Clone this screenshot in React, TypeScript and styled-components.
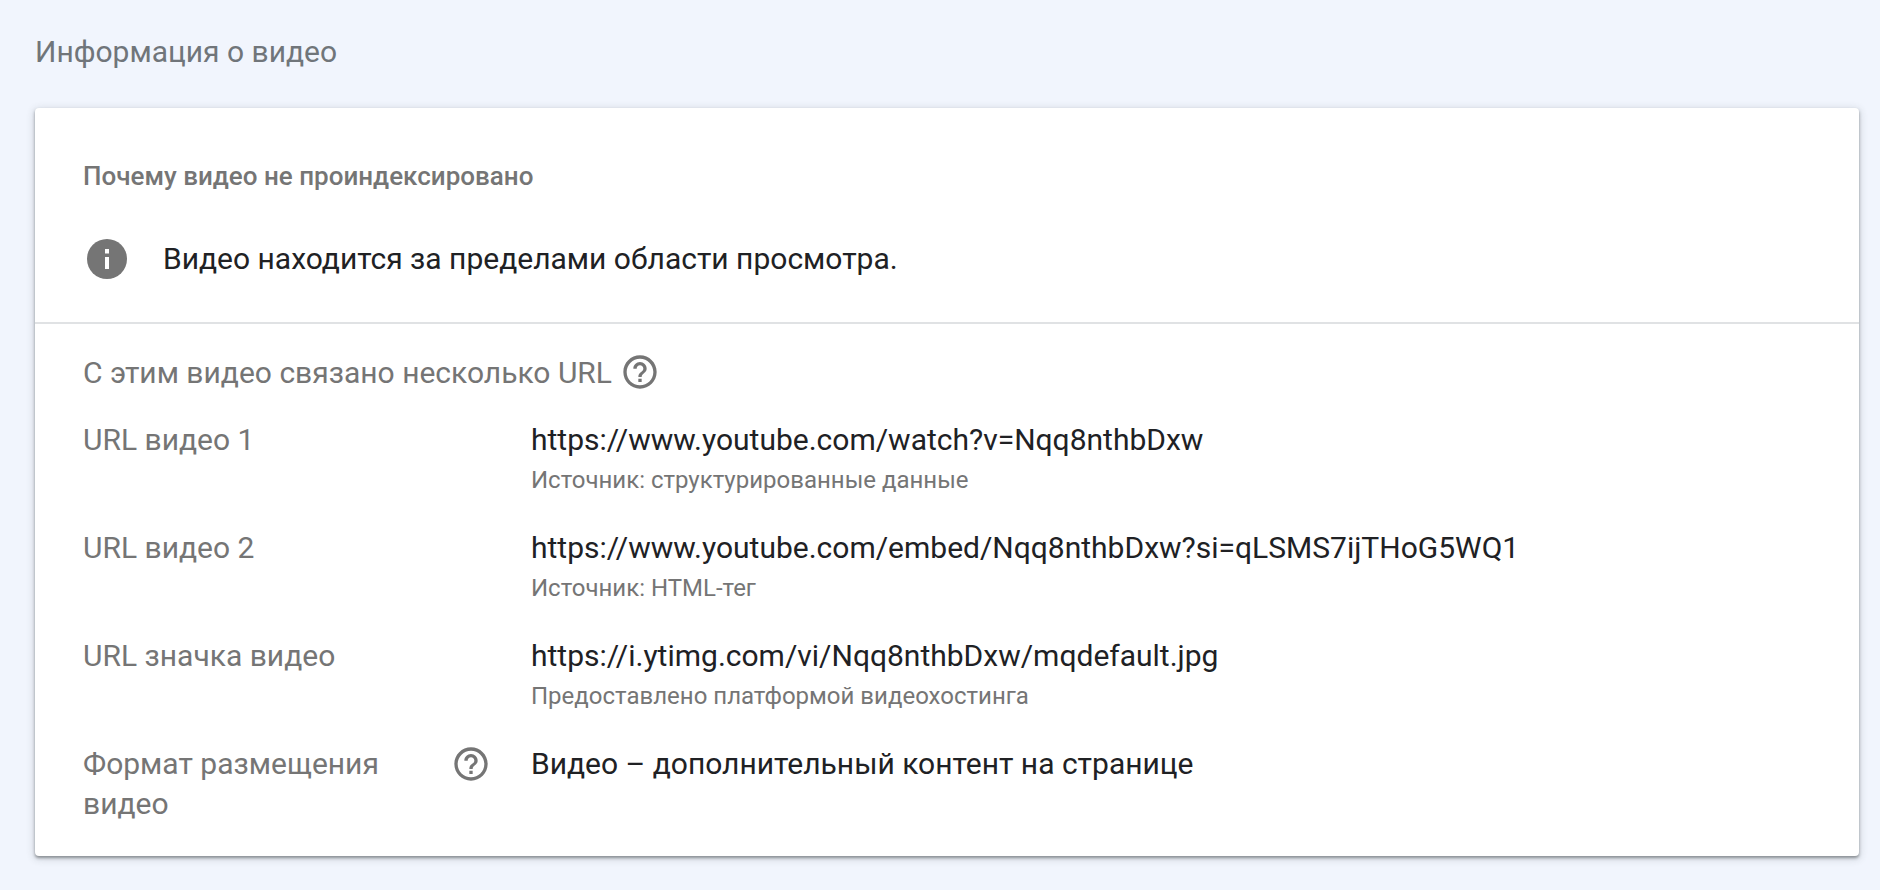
import React from 'react';
import styled, { createGlobalStyle } from 'styled-components';

const GlobalStyle = createGlobalStyle`
  html, body {
    margin: 0;
    padding: 0;
    background: #f1f5fd;
    font-family: Roboto, "Noto Sans", sans-serif;
  }
`;

const Page = styled.div`
  height: 890px;
  padding: 0 21px 0 35px;
  box-sizing: border-box;
  overflow: hidden;
`;

const PageTitle = styled.h1`
  margin: 0;
  padding-top: 32px;
  height: 108px;
  box-sizing: border-box;
  font-size: 30px;
  line-height: 40px;
  font-weight: 400;
  color: #70757a;
`;

const Card = styled.section`
  height: 748px;
  background: #fff;
  border-radius: 4px;
  box-shadow: 0 2px 3px rgba(60, 64, 67, 0.5), 0 2px 7px 2px rgba(60, 64, 67, 0.15);
`;

const ReasonBlock = styled.div`
  height: 216px;
  box-sizing: border-box;
  padding: 52px 48px 0;
  border-bottom: 2px solid #e0e2e4;
`;

const ReasonHeading = styled.h2`
  margin: 0;
  font-size: 26px;
  line-height: 32px;
  font-weight: 500;
  color: #757575;
`;

const ReasonRow = styled.div`
  display: flex;
  align-items: center;
  margin-top: 47px;
  padding-left: 4px;
  gap: 36px;
`;

const ReasonText = styled.span`
  font-size: 30px;
  line-height: 40px;
  color: #202124;
`;

const Details = styled.div`
  padding: 28px 48px 0;
`;

const DetailsHeading = styled.div`
  display: flex;
  align-items: center;
  gap: 8px;
  height: 40px;
  margin-bottom: 28px;
  font-size: 30px;
  color: #757575;
`;

const Row = styled.div`
  display: grid;
  grid-template-columns: 448px 1fr;
  height: 108px;
`;

const RowLabel = styled.div`
  display: flex;
  justify-content: space-between;
  align-items: flex-start;
  padding-right: 40px;
  font-size: 30px;
  line-height: 40px;
  color: #757575;
`;

const RowValue = styled.div`
  font-size: 30px;
  line-height: 40px;
  color: #202124;
`;

const RowSource = styled.div`
  font-size: 24px;
  line-height: 40px;
  color: #757575;
`;

const InfoIcon = () => (
  <svg width="40" height="40" viewBox="0 0 40 40">
    <circle cx="20" cy="20" r="20" fill="#757575" />
    <rect x="18" y="10" width="4" height="4.5" fill="#fff" />
    <rect x="18" y="18" width="4" height="12" fill="#fff" />
  </svg>
);

const HelpIcon = () => (
  <svg width="40" height="40" viewBox="0 0 24 24" fill="#757575">
    <path d="M11 18h2v-2h-2v2zm1-16C6.48 2 2 6.48 2 12s4.48 10 10 10 10-4.48 10-10S17.52 2 12 2zm0 18c-4.41 0-8-3.59-8-8s3.59-8 8-8 8 3.59 8 8-3.59 8-8 8zm0-14c-2.21 0-4 1.79-4 4h2c0-1.1.9-2 2-2s2 .9 2 2c0 2-3 1.75-3 5h2c0-2.25 3-2.5 3-5 0-2.21-1.79-4-4-4z" />
  </svg>
);

const rows = [
  { label: 'URL видео 1', value: 'https://www.youtube.com/watch?v=Nqq8nthbDxw', source: 'Источник: структурированные данные' },
  { label: 'URL видео 2', value: 'https://www.youtube.com/embed/Nqq8nthbDxw?si=qLSMS7ijTHoG5WQ1', source: 'Источник: HTML-тег' },
  { label: 'URL значка видео', value: 'https://i.ytimg.com/vi/Nqq8nthbDxw/mqdefault.jpg', source: 'Предоставлено платформой видеохостинга' },
];

const App: React.FC = () => (
  <Page>
    <GlobalStyle />
    <PageTitle>Информация о видео</PageTitle>
    <Card>
      <ReasonBlock>
        <ReasonHeading>Почему видео не проиндексировано</ReasonHeading>
        <ReasonRow>
          <InfoIcon />
          <ReasonText>Видео находится за пределами области просмотра.</ReasonText>
        </ReasonRow>
      </ReasonBlock>
      <Details>
        <DetailsHeading>
          С этим видео связано несколько URL
          <HelpIcon />
        </DetailsHeading>
        {rows.map(row => (
          <Row key={row.label}>
            <RowLabel>{row.label}</RowLabel>
            <div>
              <RowValue>{row.value}</RowValue>
              <RowSource>{row.source}</RowSource>
            </div>
          </Row>
        ))}
        <Row>
          <RowLabel>
            <span>Формат размещения<br />видео</span>
            <HelpIcon />
          </RowLabel>
          <RowValue>Видео – дополнительный контент на странице</RowValue>
        </Row>
      </Details>
    </Card>
  </Page>
);

export default App;
